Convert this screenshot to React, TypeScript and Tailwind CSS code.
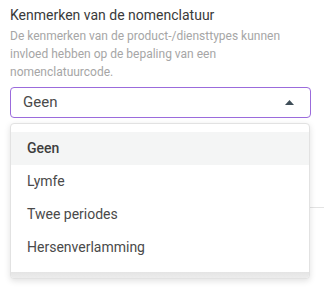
import React from "react";

export default function App() {
  const items = ["Geen", "Lymfe", "Twee periodes", "Hersenverlamming"];
  return (
    <div
      className="relative w-[324px] h-[290px] bg-white overflow-hidden"
      style={{ fontFamily: "Roboto, 'Liberation Sans', sans-serif" }}
    >
      <div className="pl-[10px] pr-[13px] pt-[5px]">
        <div className="text-[14px] leading-[20px] text-[#3a3a3a]">
          Kenmerken van de nomenclatuur
        </div>
        <div className="mt-[2px] text-[12px] leading-[18px] text-[#a6a6a6]">
          De kenmerken van de product-/diensttypes kunnen invloed hebben op de
          bepaling van een nomenclatuurcode.
        </div>
        <div className="mt-[6px] h-[31px] rounded-[4px] border border-[#9b6bdc] flex items-center justify-between pl-[12px] pr-[16px]">
          <span className="text-[15px] text-[#4a4a4a]">Geen</span>
          <svg width="9" height="5" viewBox="0 0 9 5">
            <path d="M0 5 L4.5 0 L9 5 Z" fill="#3f4e58" />
          </svg>
        </div>
      </div>
      <div className="ml-[10px] mt-[89px] h-px bg-[#e3e3e3]" />

      <div className="absolute left-[10px] top-[123px] w-[300px] rounded-[4px] border border-[#e2e2e2] bg-white shadow-[0_2px_6px_rgba(0,0,0,0.12)] overflow-hidden">
        <div className="py-[8px]">
          {items.map((it, i) => (
            <div
              key={it}
              className={
                "h-[33px] flex items-center pl-[16px] text-[14px] " +
                (i === 0
                  ? "bg-[#f4f5f5] font-medium text-[#3e3e3e]"
                  : "text-[#4a4a4a]")
              }
            >
              {it}
            </div>
          ))}
        </div>
        <div className="h-[6px] bg-gradient-to-b from-[#e4e4e4] to-[#ececec]" />
      </div>
    </div>
  );
}
